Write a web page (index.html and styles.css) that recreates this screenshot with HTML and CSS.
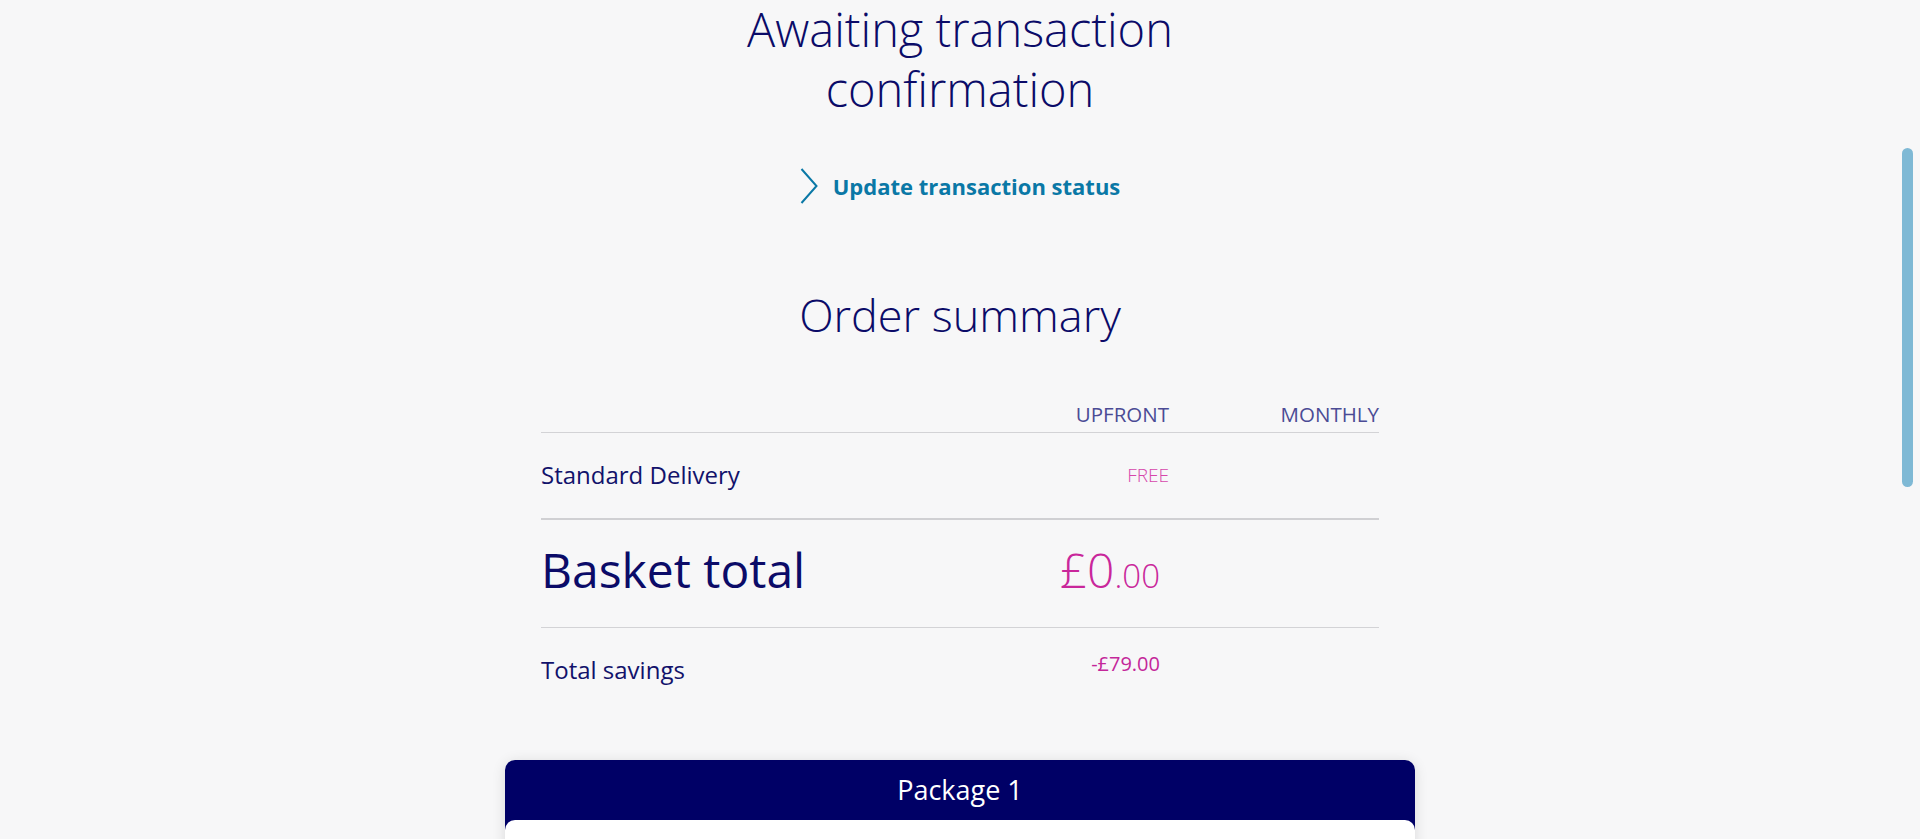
FILE: index.html
```html
<!DOCTYPE html>
<html lang="en">
<head>
<meta charset="utf-8">
<title>Awaiting transaction confirmation</title>
<link rel="stylesheet" href="styles.css">
</head>
<body>
<main class="page">
  <h1 class="title">Awaiting transaction<br>confirmation</h1>
  <a class="status-link" href="#">
    <svg class="chev" width="18" height="36" viewBox="0 0 18 36" aria-hidden="true"><path d="M1.5 1 L16.5 18 L1.5 35" fill="none" stroke="#0a78a6" stroke-width="2"/></svg>
    <span>Update transaction status</span>
  </a>
  <h2 class="summary-title">Order summary</h2>
  <section class="summary">
    <div class="row head">
      <span></span>
      <span class="col-r">UPFRONT</span>
      <span class="col-r">MONTHLY</span>
    </div>
    <div class="row delivery">
      <span class="label">Standard Delivery</span>
      <span class="col-r free">FREE</span>
      <span></span>
    </div>
    <div class="row basket">
      <span class="basket-label">Basket total</span>
      <span class="col-r price"><span class="big">£0</span><span class="small">.00</span></span>
      <span></span>
    </div>
    <div class="row savings">
      <span class="label">Total savings</span>
      <span class="col-r saving-val">-£79.00</span>
      <span></span>
    </div>
  </section>
  <section class="package">
    <div class="package-head">Package 1</div>
    <div class="package-body"></div>
  </section>
</main>
<div class="scrollbar"></div>
</body>
</html>
```
FILE: styles.css
```css
html, body {
  margin: 0;
  padding: 0;
  height: 100%;
  overflow: hidden;
}
body {
  background: #f7f7f8;
  font-family: "Open Sans", "Noto Sans", sans-serif;
  color: #0b0b68;
}
.page {
  display: flex;
  flex-direction: column;
  align-items: center;
}
.title {
  margin: -1px 0 0;
  font-size: 47px;
  line-height: 60px;
  font-weight: 300;
  text-align: center;
  color: #0b0b68;
}
.status-link {
  margin-top: 49px;
  display: flex;
  align-items: center;
  gap: 15px;
  height: 36px;
  color: #0a78a6;
  text-decoration: none;
  font-size: 22px;
  font-weight: 700;
  line-height: 36px;
}
.chev { display: block; }
.summary-title {
  margin: 81px 0 0;
  font-size: 45px;
  line-height: 60px;
  font-weight: 300;
  color: #0b0b68;
}
.summary {
  width: 838px;
  margin-top: 55px;
}
.row {
  display: grid;
  grid-template-columns: 1fr 200px 210px;
  align-items: start;
}
.col-r { text-align: right; }
.head {
  font-size: 20.5px;
  line-height: 28px;
  padding-bottom: 4px;
  border-bottom: 1px solid #d3d3d6;
  color: #4b4b95;
}
.label {
  font-size: 24px;
  line-height: 28px;
  color: #12126b;
}
.delivery {
  padding: 28px 0 29px;
  border-bottom: 2px solid #d0d0d3;
}
.free {
  font-size: 19px;
  line-height: 28px;
  font-weight: 300;
  color: #d646ab;
}
.basket {
  padding: 20px 0 27px;
  border-bottom: 1px solid #d3d3d6;
}
.basket-label {
  font-size: 48px;
  line-height: 60px;
  color: #0b0b68;
}
.price {
  font-size: 48px;
  line-height: 60px;
  color: #c9279b;
  padding-right: 9px;
  font-weight: 300;
}
.price .small {
  font-size: 33px;
  line-height: 1;
}
.savings {
  padding-top: 28px;
}
.saving-val {
  font-size: 20px;
  line-height: 16px;
  color: #c4279a;
  padding-right: 9px;
}
.package {
  margin-top: 76px;
  width: 910px;
  background: #000066;
  border-radius: 10px 10px 0 0;
  box-shadow: 0 2px 14px rgba(0, 0, 0, 0.12);
}
.package-head {
  height: 60px;
  line-height: 60px;
  text-align: center;
  color: #ffffff;
  font-size: 27px;
  font-weight: 400;
}
.package-body {
  height: 200px;
  background: #ffffff;
  border-radius: 10px 10px 0 0;
}
.scrollbar {
  position: fixed;
  left: 1902px;
  top: 148px;
  width: 11px;
  height: 339px;
  border-radius: 6px;
  background: #7fb9d5;
}
```
